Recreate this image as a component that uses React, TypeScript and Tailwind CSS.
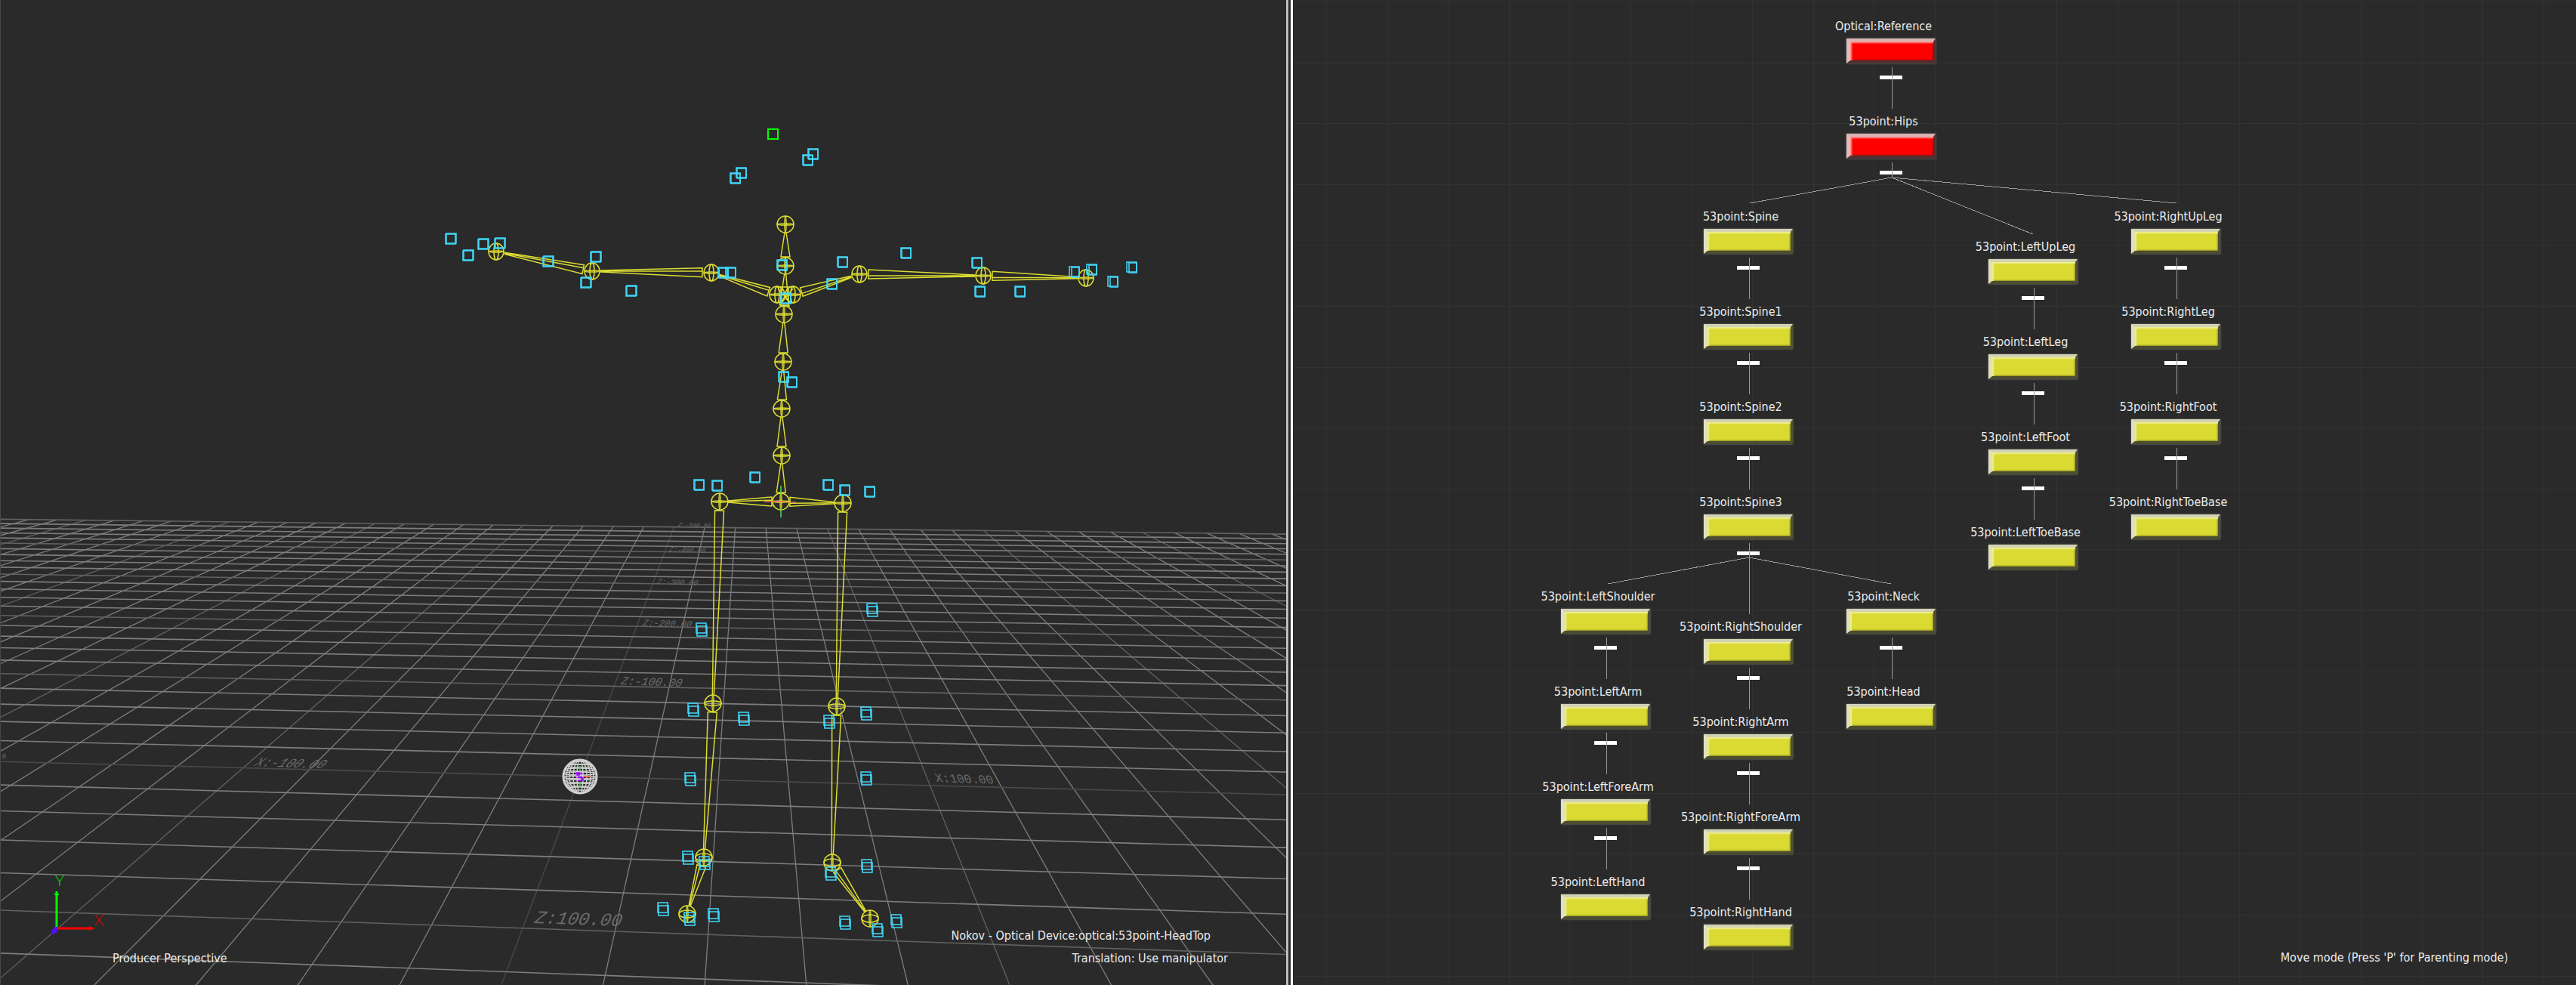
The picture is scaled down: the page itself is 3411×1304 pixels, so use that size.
import React from "react";

type Point = [number, number];

const LABEL_FONT = "font-['DejaVu_Sans_Condensed','DejaVu_Sans',sans-serif] text-[16px] leading-5 text-[#ececec] whitespace-nowrap";

/* ---------- 3D viewport ---------- */

// Floor cell (x, z) projected to the screen; one cell is 20 scene units.
function project(x: number, z: number): Point {
  const a = -0.003861 * x;
  const b = -0.05074 * z;
  const w = 1 + a + b;
  return [(768 - 22779 * a + 991 * b) / w, (1028 + 422.8 * a + 437.3 * b) / w];
}

function floorColor(i: number) {
  if (i === 0) return "#4a4a4a";
  return i % 5 === 0 ? "#626262" : "#7e7e7e";
}

function Floor() {
  const across: number[] = [];
  for (let z = -25; z <= 7; z++) across.push(z);
  const along: number[] = [];
  for (let x = -25; x <= 25; x++) along.push(x);
  return (
    <g>
      <g strokeWidth={1.3}>
        {along.map((x) => {
          const [x1, y1] = project(x, -25);
          const [x2, y2] = project(x, 10);
          return <line key={x} x1={x1} y1={y1} x2={x2} y2={y2} stroke={floorColor(x)} />;
        })}
      </g>
      <g strokeWidth={1.6}>
        {across.map((z) => {
          const [x1, y1] = project(-25, z);
          const [x2, y2] = project(25, z);
          return <line key={z} x1={x1} y1={y1} x2={x2} y2={y2} stroke={floorColor(z)} />;
        })}
      </g>
    </g>
  );
}

const floorLabels: { text: string; x: number; y: number; size: number; skew: number }[] = [
  { text: "Z:100.00", x: 706, y: 1222, size: 24, skew: -20 },
  { text: "X:-100.00", x: 335, y: 1014, size: 17, skew: -40 },
  { text: "0", x: 2, y: 1004, size: 9, skew: -10 },
  { text: "X:100.00", x: 1240, y: 1035, size: 16, skew: 20 },
  { text: "Z:-100.00", x: 821, y: 906, size: 15, skew: -20 },
  { text: "Z:-200.00", x: 850, y: 828, size: 12, skew: -20 },
  { text: "Z:-300.00", x: 869, y: 773, size: 10, skew: -20 },
  { text: "Z:-400.00", x: 885, y: 730, size: 9, skew: -20 },
  { text: "Z:-500.00", x: 897, y: 697, size: 8, skew: -20 },
];

function FloorLabels() {
  return (
    <g fill="#6a6a6a" className="font-['Liberation_Mono',monospace]">
      {floorLabels.map((l) => (
        <text key={l.text} fontSize={l.size} transform={`translate(${l.x} ${l.y}) rotate(2) skewX(${l.skew})`}>
          {l.text}
        </text>
      ))}
    </g>
  );
}

const joints = {
  hips: [1034, 664], spine: [1035, 603], spine1: [1035, 541], spine2: [1037, 479], spine3: [1038, 416],
  neck: [1040, 352], head: [1040, 297],
  rClav: [1029, 390], rShoulder: [942, 361], rElbow: [784, 359], rHand: [657, 333],
  lClav: [1050, 390], lShoulder: [1138, 363], lElbow: [1302, 365], lHand: [1438, 368],
  rHip: [953, 664], rKnee: [944, 931], rAnkle: [932, 1135], rToe: [910, 1210],
  lHip: [1116, 666], lKnee: [1108, 935], lAnkle: [1102, 1142], lToe: [1152, 1216],
} satisfies Record<string, Point>;

type Joint = keyof typeof joints;

const bones: [Joint, Joint, boolean][] = [
  ["hips", "spine", false], ["spine", "spine1", false], ["spine1", "spine2", false], ["spine2", "spine3", false],
  ["spine3", "neck", false], ["neck", "head", false],
  ["rClav", "rShoulder", true], ["rShoulder", "rElbow", true], ["rElbow", "rHand", true],
  ["lClav", "lShoulder", true], ["lShoulder", "lElbow", true], ["lElbow", "lHand", true],
  ["hips", "rHip", true], ["rHip", "rKnee", false], ["rKnee", "rAnkle", false], ["rAnkle", "rToe", true],
  ["hips", "lHip", true], ["lHip", "lKnee", false], ["lKnee", "lAnkle", false], ["lAnkle", "lToe", true],
];

function Bone({ from, to, ridge }: { from: Point; to: Point; ridge: boolean }) {
  const dx = to[0] - from[0];
  const dy = to[1] - from[1];
  const len = Math.hypot(dx, dy);
  const ux = dx / len;
  const uy = dy / len;
  const at = (along: number, side: number) =>
    `${(from[0] + ux * along - uy * side).toFixed(1)} ${(from[1] + uy * along + ux * side).toFixed(1)}`;
  const tip = len - 11;
  return (
    <path
      d={
        `M${at(tip, -1)} L${at(12, -6)} L${at(12, 6)} L${at(tip, 1)}` +
        (ridge ? ` M${at(12, 2)} L${at(tip, 0)}` : "")
      }
    />
  );
}

function Skeleton() {
  const side: Joint[] = ["rHand", "rElbow", "rShoulder", "lShoulder", "lElbow", "lHand", "rClav", "lClav"];
  return (
    <g fill="none" stroke="#dcdc32" strokeWidth={1.5}>
      {bones.map(([a, b, ridge]) => (
        <Bone key={a + b} from={joints[a] as Point} to={joints[b] as Point} ridge={ridge} />
      ))}
      {(Object.keys(joints) as Joint[]).map((name) => {
        const [x, y] = joints[name];
        const isSide = side.includes(name);
        const rx = isSide ? 10 : 11;
        const tilt = y > 1100 ? 5 : y > 850 ? 3 : 1;
        return (
          <g key={name}>
            <ellipse cx={x} cy={y} rx={rx} ry={11} />
            <ellipse cx={x} cy={y} rx={rx} ry={tilt} />
            <ellipse cx={x} cy={y} rx={isSide ? 3 : 1} ry={11} />
          </g>
        );
      })}
      <path d="M1028 380h24M1034 381v24M1044 381v24M1033 405h13M1030 382l18 20M1050 382l-16 20" />
    </g>
  );
}

const upperMarkers: Point[] = [
  [598, 316], [621, 338], [641, 323], [663, 322], [727, 346], [790, 340], [777, 374], [837, 385], [958, 361], [968, 361],
  [1077, 204], [1070, 212], [982, 229], [974, 236], [1036, 351], [1041, 395], [1102, 376], [1038, 499], [1049, 506],
  [1116, 347], [1200, 335], [1294, 348], [1298, 386], [1351, 386], [1423, 360], [1446, 357], [1499, 354], [1474, 373],
  [926, 642], [950, 643], [1000, 632], [1097, 642], [1119, 649], [1152, 651],
];

const lowerMarkers: Point[] = [
  [1155, 807], [929, 833], [918, 939], [985, 951], [1098, 955], [1147, 944], [914, 1031], [1147, 1030], [911, 1135],
  [933, 1142], [1100, 1156], [1148, 1146], [878, 1203], [913, 1216], [945, 1211], [1119, 1221], [1162, 1231], [1187, 1219],
];

function Markers() {
  return (
    <g fill="none" strokeWidth={1.5} stroke="#41dcff">
      {upperMarkers.map(([x, y], i) => {
        const shift = x < 900 ? -1 : x > 1400 ? 3 : 1;
        return (
          <g key={i}>
            <rect x={x - 7} y={y - 7} width={13} height={13} />
            <rect x={x - 7 + shift} y={y - 6} width={13 - Math.max(shift, 0)} height={13} />
          </g>
        );
      })}
      {lowerMarkers.map(([x, y], i) => (
        <g key={i}>
          <rect x={x - 7} y={y - 8} width={13} height={13} />
          <rect x={x - 6} y={y - 4} width={13} height={13} />
        </g>
      ))}
      <rect x={1017} y={171} width={13} height={13} stroke="#00ff00" strokeWidth={2} />
    </g>
  );
}

function OriginSphere() {
  return (
    <g transform="translate(768 1028)" fill="none" stroke="#d0d0d0" strokeWidth={1.4}>
      <rect x={-6} y={-7} width={11} height={13} fill="#9a00ff" stroke="none" />
      <circle r={22} strokeWidth={3} />
      {[4, 9, 14, 18].map((r) => (
        <ellipse key={r} rx={r} ry={22} />
      ))}
      {[-18, -14, -9, -4, 1, 6, 11, 16].map((y) => {
        const half = Math.sqrt(22 * 22 - y * y);
        return <ellipse key={y} cy={y} rx={half} ry={2} />;
      })}
      <path d="M-4-5v3h3v-3zM2 2v3h2v-3z" fill="#9a00ff" stroke="#9a00ff" />
      <path d="M0-14V-7M0 7V14" stroke="#3ddc3d" />
      <path d="M5 0H14" stroke="#ff5a4a" />
    </g>
  );
}

function AxisGizmo() {
  return (
    <g>
      <path d="M71 1217v12" stroke="#3a10d0" />
      <path d="M75 1228V1180" stroke="#00ff00" strokeWidth={3} />
      <path d="M72 1184h6" stroke="#00ff00" strokeWidth={2} />
      <path d="M76 1229h46" stroke="#ff0000" strokeWidth={3} />
      <path d="M118 1226l8 3l-8 3z" fill="#ff0000" />
      <path d="M70 1231l5-3l-1 6l-5 2z" fill="#5010ff" stroke="#5010ff" strokeWidth={2} />
      <g className="font-['Lato',sans-serif] font-light" fontSize={20} textAnchor="middle">
        <text x={79} y={1173} fill="#00e000">Y</text>
        <text x={131} y={1225} fill="#e00000">X</text>
      </g>
    </g>
  );
}

function Viewport() {
  return (
    <section aria-label="Producer Perspective" className="relative flex flex-col justify-end overflow-hidden border-l border-[#484848] bg-[#2a2a2a]">
      <svg className="absolute inset-0 h-full w-full" viewBox="1 0 1702 1304" preserveAspectRatio="xMinYMin slice" aria-hidden="true">
        <Floor />
        <FloorLabels />
        <Skeleton />
        <Markers />
        <g strokeWidth={1.5}>
          <path d="M1034 643v11M1034 673v12" stroke="#4cd964" />
          <path d="M1012 664h28M1045 665h9" stroke="#f0705a" />
        </g>
        <OriginSphere />
        <AxisGizmo />
      </svg>
      <div className={`relative flex flex-col gap-2.5 pb-[25px] pl-[148px] pr-[77px] ${LABEL_FONT}`}>
        <p className="self-end pr-[23px]">Nokov - Optical Device:optical:53point-HeadTop</p>
        <div className="flex justify-between">
          <p>Producer Perspective</p>
          <p>Translation: Use manipulator</p>
        </div>
      </div>
    </section>
  );
}

/* ---------- Schematic ---------- */

interface SchematicNode {
  name: string;
  x: number;
  y: number;
  root?: boolean;
  children: "none" | "one" | "many";
}

function chain(x: number, y: number, names: string[], last: SchematicNode["children"] = "none"): SchematicNode[] {
  return names.map((name, i) => ({
    name: `53point:${name}`,
    x,
    y: y + i * 126,
    children: i === names.length - 1 ? last : "one",
  }));
}

const nodes: SchematicNode[] = [
  { name: "Optical:Reference", x: 732, y: 50, root: true, children: "one" },
  { name: "53point:Hips", x: 732, y: 176, root: true, children: "many" },
  ...chain(543, 302, ["Spine", "Spine1", "Spine2", "Spine3"], "many"),
  ...chain(920, 342, ["LeftUpLeg", "LeftLeg", "LeftFoot", "LeftToeBase"]),
  ...chain(1109, 302, ["RightUpLeg", "RightLeg", "RightFoot", "RightToeBase"]),
  ...chain(354, 805, ["LeftShoulder", "LeftArm", "LeftForeArm", "LeftHand"]),
  ...chain(543, 845, ["RightShoulder", "RightArm", "RightForeArm", "RightHand"]),
  ...chain(732, 805, ["Neck", "Head"]),
];

const RED_BOX =
  "border-t-[#d8b4b4] border-l-[#e2bcbc] border-r-[#5c2a2a] border-b-[#4e3030] bg-[#ff0000] shadow-[inset_2px_2px_2px_#ff9090,inset_-1px_-1px_2px_#a01010,0_0_2px_#808080]";
const YELLOW_BOX =
  "border-t-[#d2d2b4] border-l-[#e0e0bc] border-r-[#505030] border-b-[#4c4c30] bg-[#dada32] shadow-[inset_2px_2px_2px_#f0f090,inset_-1px_-1px_2px_#8c8c24,0_0_2px_#808080]";

function NodeCard({ node }: { node: SchematicNode }) {
  return (
    <div className="absolute flex w-[120px] flex-col items-center" style={{ left: node.x, top: node.y - 25 }}>
      <span id={node.name} className={`mr-5 ${LABEL_FONT}`}>{node.name}</span>
      <button
        type="button"
        aria-labelledby={node.name}
        className={`mt-1.5 h-[33px] w-[118px] border-t-4 border-r-[3px] border-b-4 border-l-[5px] ${node.root ? RED_BOX : YELLOW_BOX}`}
      />
      {node.children !== "none" && <span className="mt-4 h-[5px] w-[30px] bg-white" />}
    </div>
  );
}

function Links() {
  const lines: [number, number, number, number][] = [
    [793, 235, 605, 269],
    [793, 235, 980, 310],
    [793, 235, 1170, 269],
    [604, 738, 417, 773],
    [604, 738, 792, 773],
    [604, 735, 604, 813],
  ];
  return (
    <g stroke="#9c9c9c" strokeWidth={1} shapeRendering="crispEdges">
      {lines.map((l, i) => (
        <line key={i} x1={l[0]} y1={l[1]} x2={l[2]} y2={l[3]} />
      ))}
      {nodes
        .filter((n) => n.children !== "none")
        .map((n) => (
          <line key={n.name} x1={n.x + 61} x2={n.x + 61} y1={n.y + 39} y2={n.y + (n.children === "one" ? 94 : 59)} />
        ))}
    </g>
  );
}

function Schematic() {
  const columns = Array.from({ length: 22 }, (_, i) => Math.round(44 + i * 80.6));
  const rows = Array.from({ length: 17 }, (_, i) => Math.round(2 + i * 80.6));
  return (
    <section aria-label="Schematic" className="relative flex flex-col justify-end overflow-hidden bg-[#2a2a2a]">
      <svg className="absolute inset-0 h-full w-full" aria-hidden="true">
        <g fill="#323232">
          {columns.map((x) => (
            <rect key={x} x={x} y={0} width={1} height="100%" />
          ))}
          {rows.map((y) => (
            <rect key={y} x={0} y={y} width="100%" height={1} />
          ))}
        </g>
      </svg>
      {nodes.map((n) => (
        <NodeCard key={n.name} node={n} />
      ))}
      <svg className="pointer-events-none absolute inset-0 h-full w-full" aria-hidden="true">
        <Links />
      </svg>
      <p className={`relative self-end pb-[26px] pr-[90px] ${LABEL_FONT}`}>Move mode (Press 'P' for Parenting mode)</p>
    </section>
  );
}

export default function App() {
  return (
    <main className="grid min-h-screen grid-cols-[1703fr_9px_1699fr] bg-[#2a2a2a]">
      <Viewport />
      <div role="separator" aria-orientation="vertical" className="border-r-[3px] border-l-[3px] border-r-white border-l-[#bdbdbd] bg-[#2a2a2a]" />
      <Schematic />
    </main>
  );
}
